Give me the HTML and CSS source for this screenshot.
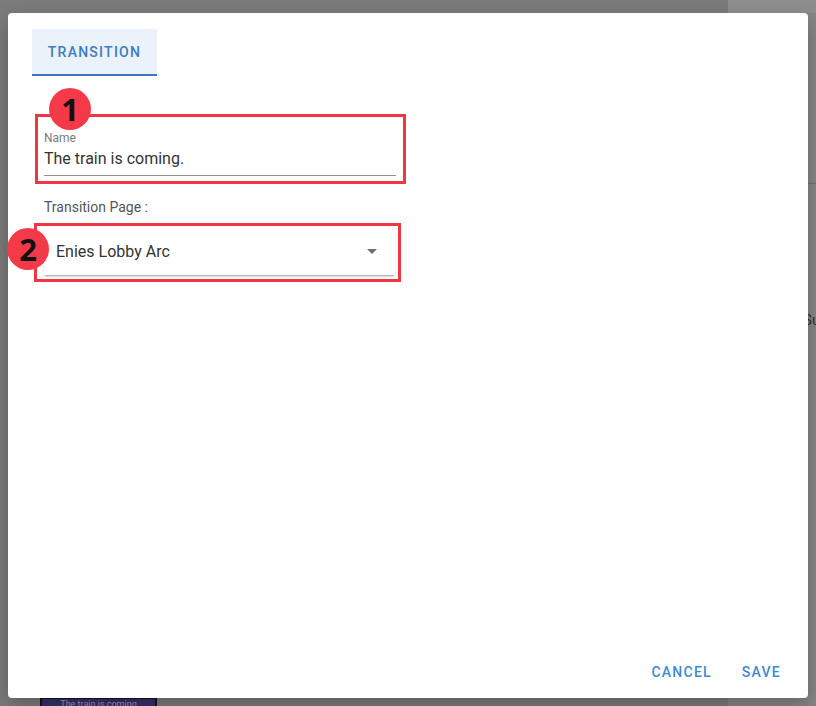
FILE: index.html
```html
<!DOCTYPE html>
<html lang="en">
<head>
<meta charset="utf-8">
<title>Transition</title>
<link rel="stylesheet" href="styles.css">
</head>
<body>
<div class="backdrop">
  <div class="main">
    <div class="card">The train is coming</div>
  </div>
  <div class="side">
    <div class="side-top"></div>
    <div class="side-rule"></div>
    <div class="side-text">Subtitle</div>
  </div>
</div>

<div class="dialog">
  <div class="tabs">
    <div class="tab">TRANSITION</div>
  </div>
  <div class="body">
    <div class="box box-name">
      <span class="badge badge-1">1</span>
      <div class="field">
        <div class="field-label">Name</div>
        <div class="field-input">The train is coming.</div>
      </div>
    </div>
    <div class="page-label">Transition Page :</div>
    <div class="box box-select">
      <span class="badge badge-2">2</span>
      <div class="select">
        <span class="select-value">Enies Lobby Arc</span>
        <svg class="caret" width="10" height="5" viewBox="0 0 10 5"><path d="M0 0h10L5 5z" fill="#707070"/></svg>
      </div>
    </div>
  </div>
  <div class="actions">
    <button class="btn">CANCEL</button>
    <button class="btn">SAVE</button>
  </div>
</div>
</body>
</html>
```
FILE: styles.css
```css
html, body {
  margin: 0;
  padding: 0;
  height: 100%;
  overflow: hidden;
}
body {
  font-family: Roboto, "Liberation Sans", sans-serif;
  background: #7b7b7b;
}
.backdrop {
  display: flex;
  height: 706px;
}
.main {
  flex: 1;
  display: flex;
  flex-direction: column;
  justify-content: flex-end;
  padding-left: 40px;
}
.card {
  width: 113px;
  height: 18px;
  margin-bottom: -13px;
  background: #37306a;
  border: 2px solid #161616;
  color: #9d99bd;
  font-size: 9px;
  text-align: center;
  line-height: 10px;
}
.side {
  width: 88px;
  background: #868686;
  display: flex;
  flex-direction: column;
}
.side-top {
  height: 13px;
  background: #8e8e8e;
}
.side-rule {
  margin-top: 170px;
  height: 1px;
  background: #707070;
}
.side-text {
  margin-top: 127px;
  padding-left: 75px;
  font-size: 15px;
  color: #333;
  white-space: nowrap;
}
.dialog {
  position: absolute;
  left: 8px;
  top: 13px;
  width: 800px;
  height: 685px;
  background: #fff;
  border-radius: 4px;
  box-shadow: 0 8px 20px rgba(0,0,0,0.25);
  display: flex;
  flex-direction: column;
  box-sizing: border-box;
}
.tabs {
  padding: 16px 24px 0;
  display: flex;
}
.tab {
  width: 125px;
  height: 45px;
  background: #ebf2fa;
  border-bottom: 2px solid #3a78bd;
  color: #3b7dc0;
  font-size: 14px;
  font-weight: 500;
  letter-spacing: 1.25px;
  display: flex;
  align-items: center;
  justify-content: center;
}
.body {
  flex: 1;
  padding: 38px 0 0 26px;
  display: flex;
  flex-direction: column;
  align-items: flex-start;
}
.box {
  position: relative;
  border: 3px solid #ef3645;
  box-sizing: border-box;
}
.box-name {
  margin-left: 1px;
  width: 371px;
  height: 70px;
  padding: 14px 7px 0 6px;
}
.badge {
  position: absolute;
  width: 42px;
  height: 42px;
  border-radius: 50%;
  background: #f43a49;
  color: #111;
  font-family: "Open Sans", "DejaVu Sans", sans-serif;
  font-weight: 700;
  font-size: 31px;
  line-height: 42px;
  text-align: center;
}
.badge-1 {
  left: 11px;
  top: -29px;
}
.badge-2 {
  left: -30px;
  top: 2px;
}
.field-label {
  font-size: 12px;
  line-height: 14px;
  color: #7a7a7a;
}
.field-input {
  margin-top: 4px;
  font-size: 16px;
  line-height: 20px;
  color: #333;
  padding-bottom: 6px;
  border-bottom: 1px solid #8f8f8f;
}
.page-label {
  margin: 15px 0 0 10px;
  font-size: 14px;
  line-height: 16px;
  color: #555;
}
.box-select {
  margin-top: 8px;
  width: 367px;
  height: 59px;
  padding: 1px 0 0 7px;
}
.select {
  width: 351px;
  height: 48px;
  box-sizing: border-box;
  padding: 0 18px 0 12px;
  display: flex;
  align-items: center;
  justify-content: space-between;
  background: #fff;
  box-shadow: 0 2px 2px -1px rgba(0,0,0,0.35), 0 1px 3px rgba(0,0,0,0.08);
}
.select-value {
  font-size: 16px;
  color: #333;
}
.caret {
  display: block;
}
.actions {
  display: flex;
  justify-content: flex-end;
  gap: 14px;
  padding: 0 19px 8px;
}
.btn {
  height: 36px;
  padding: 0 8px;
  border: 0;
  background: transparent;
  font-family: Roboto, "Liberation Sans", sans-serif;
  font-size: 14px;
  font-weight: 500;
  letter-spacing: 1.25px;
  color: #3d8bcf;
  cursor: pointer;
}
```
